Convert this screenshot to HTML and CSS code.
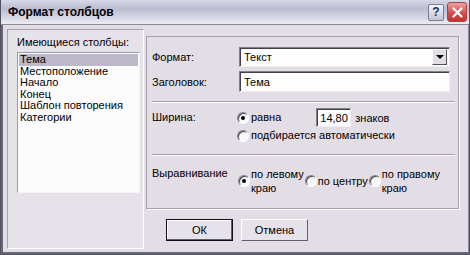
FILE: index.html
```html
<!DOCTYPE html>
<html lang="ru">
<head>
  <meta charset="UTF-8">
  <title>Формат столбцов</title>
  <link rel="stylesheet" href="styles.css">
</head>
<body>

  <div class="window">
    <div class="titlebar">
      <span class="title">Формат столбцов</span>
      <div class="tb-buttons">
        <span class="tb-help">?</span>
        <span class="tb-close">
          <svg width="11" height="11" viewBox="0 0 11 11"><path d="M1.5 1.5 L9.5 9.5 M9.5 1.5 L1.5 9.5" stroke="#fff" stroke-width="2.2" stroke-linecap="round"/></svg>
        </span>
      </div>
    </div>

    <div class="client">
      <div class="left-pane">
        <div class="list-label">Имеющиеся столбцы:</div>
        <ul class="listbox">
          <li class="selected">Тема</li>
          <li>Местоположение</li>
          <li>Начало</li>
          <li>Конец</li>
          <li>Шаблон повторения</li>
          <li>Категории</li>
        </ul>
      </div>

      <div class="right-pane">
        <div class="props">
          <div class="group group-format">
            <div class="row">
              <span class="label">Формат:</span>
              <div class="combo">
                <span class="combo-text">Текст</span>
                <span class="combo-btn"><span class="arrow"></span></span>
              </div>
            </div>
            <div class="row">
              <span class="label">Заголовок:</span>
              <div class="edit">Тема</div>
            </div>
          </div>

          <div class="group group-width">
            <span class="label">Ширина:</span>
            <div class="options">
              <div class="opt-row">
                <span class="radio checked"></span>
                <span class="opt-text">равна</span>
                <div class="edit small">14,80</div>
                <span class="unit">знаков</span>
              </div>
              <div class="opt-row">
                <span class="radio"></span>
                <span class="opt-text">подбирается автоматически</span>
              </div>
            </div>
          </div>

          <div class="group group-align">
            <span class="label">Выравнивание</span>
            <div class="align-opts">
              <div class="align-opt">
                <span class="radio checked"></span>
                <span class="opt-text">по левому<br>краю</span>
              </div>
              <div class="align-opt">
                <span class="radio"></span>
                <span class="opt-text">по центру</span>
              </div>
              <div class="align-opt">
                <span class="radio"></span>
                <span class="opt-text">по правому<br>краю</span>
              </div>
            </div>
          </div>
        </div>

        <div class="actions">
          <button class="btn default">ОК</button>
          <button class="btn">Отмена</button>
        </div>
      </div>
    </div>
  </div>

</body>
</html>
```

FILE: styles.css
```css
body {
  margin: 0;
  padding: 0;
  font-family: "Liberation Sans", Arial, sans-serif;
  font-size: 11px;
  color: #000;
  background: #e3dde5;
}

.window {
  width: 470px;
  height: 255px;
  box-sizing: border-box;
  border: 1px solid #505060;
  border-top: none;
  background: #e3dde5;
  display: flex;
  flex-direction: column;
  overflow: hidden;
}

.titlebar {
  height: 25px;
  box-sizing: border-box;
  display: flex;
  align-items: center;
  justify-content: space-between;
  padding: 0 2px 0 7px;
  background: linear-gradient(#d8d8e8, #bcbcd2 35%, #d4d4e2 70%, #ececf2);
  border-bottom: 1px solid #8c8898;
}

.title {
  font-weight: bold;
  font-size: 12px;
}

.tb-buttons {
  display: flex;
  align-items: center;
  gap: 3px;
}

.tb-help {
  width: 16px;
  height: 17px;
  box-sizing: border-box;
  border: 1px solid #7c7c90;
  border-radius: 2px;
  background: linear-gradient(#f4f4f8, #c4c4d4);
  color: #203070;
  font-weight: bold;
  font-size: 12px;
  display: flex;
  align-items: center;
  justify-content: center;
}

.tb-close {
  width: 20px;
  height: 20px;
  box-sizing: border-box;
  border: 1px solid #a04848;
  border-radius: 3px;
  background: linear-gradient(#f0a0a0, #d84848 60%, #c83030);
  display: flex;
  align-items: center;
  justify-content: center;
}

.client {
  flex: 1;
  display: flex;
  padding: 4px 2px 3px 4px;
  border-left: 2px solid #686878;
  border-right: 1px solid #8c8898;
  border-bottom: 2px solid #686878;
  gap: 2px;
}

.left-pane {
  width: 137px;
  box-sizing: border-box;
  border: 1px solid #a8a0ac;
  border-right-color: #fff;
  border-bottom-color: #fff;
  padding: 6px 3px 0 9px;
  background: #e6e2ea;
}

.list-label {
  height: 16px;
  line-height: 13px;
}

.listbox {
  list-style: none;
  margin: 0;
  padding: 1px;
  height: 141px;
  box-sizing: border-box;
  background: #fcfcfc;
  border: 1px solid #9c98a4;
  border-right-color: #f4f0f4;
  border-bottom-color: #f4f0f4;
}

.listbox li {
  line-height: 11.6px;
  height: 11.6px;
  padding-left: 1px;
}

.listbox li.selected {
  background: #bcb8c8;
}

.right-pane {
  flex: 1;
  display: flex;
  flex-direction: column;
  padding-top: 7px;
}

.props {
  width: 314px;
  height: 174px;
  box-sizing: border-box;
  border: 1px solid #a8a0ac;
  border-right-color: #fff;
  border-bottom-color: #fff;
  box-shadow: inset -1px -1px 0 #a8a0ac;
  display: flex;
  flex-direction: column;
  padding: 0 4px 0 5px;
}

.group {
  border-bottom: 1px solid #a8a0ac;
  box-shadow: 0 1px 0 #fff;
  display: flex;
}

.group:last-child {
  border-bottom: none;
  box-shadow: none;
}

.label {
  width: 87px;
  flex: none;
}

.group-format {
  height: 65px;
  flex-direction: column;
  padding-top: 10px;
  box-sizing: border-box;
  gap: 4px;
}

.group-format .row {
  display: flex;
  align-items: center;
  padding-right: 5px;
}

.combo, .edit {
  flex: 1;
  height: 20px;
  box-sizing: border-box;
  background: #fdfdfd;
  border: 1px solid #808088;
  border-right-color: #f0eef2;
  border-bottom-color: #f0eef2;
  box-shadow: inset 1px 1px 0 #404048;
  display: flex;
  align-items: center;
  padding-left: 4px;
}

.edit {
  height: 21px;
}

.combo {
  justify-content: space-between;
  padding-right: 2px;
}

.combo-btn {
  width: 15px;
  height: 16px;
  box-sizing: border-box;
  background: #e3dde5;
  border: 1px solid #fff;
  border-right-color: #505058;
  border-bottom-color: #505058;
  display: flex;
  align-items: center;
  justify-content: center;
}

.arrow {
  width: 0;
  height: 0;
  border-left: 4px solid transparent;
  border-right: 4px solid transparent;
  border-top: 4px solid #000;
}

.group-width {
  height: 53px;
  box-sizing: border-box;
  padding-top: 7px;
}

.group-width .label {
  padding-top: 2px;
}

.options {
  display: flex;
  flex-direction: column;
  gap: 1px;
}

.opt-row {
  display: flex;
  align-items: center;
  height: 17px;
}

.radio {
  width: 12px;
  height: 12px;
  box-sizing: border-box;
  border-radius: 50%;
  border: 1px solid #808088;
  border-right-color: #fff;
  border-bottom-color: #fff;
  background: #f8f8f8;
  box-shadow: inset 1px 1px 0 #484850;
  flex: none;
  display: flex;
  align-items: center;
  justify-content: center;
}

.radio.checked::after {
  content: "";
  width: 4px;
  height: 4px;
  border-radius: 50%;
  background: #000;
}

.opt-text {
  line-height: 15px;
}

.group-width .opt-row .radio {
  margin-left: -2px;
  margin-right: 0;
}

.group-width .opt-text {
  margin-left: 2px;
}

.edit.small {
  flex: none;
  width: 35px;
  height: 19px;
  margin-left: 35px;
  padding-left: 3px;
}

.unit {
  margin-left: 4px;
}

.group-align {
  flex: 1;
  padding-top: 12px;
  align-items: flex-start;
}

.align-opts {
  display: flex;
  align-items: center;
  margin-left: -1px;
}

.align-opt {
  display: flex;
  align-items: center;
  margin-right: 1px;
}

.align-opt .radio {
  margin-right: 1px;
}

.align-opt .opt-text {
  line-height: 14px;
}

.actions {
  display: flex;
  gap: 8px;
  padding: 9px 0 0 20px;
}

.btn {
  width: 67px;
  height: 22px;
  font-family: "Liberation Sans", Arial, sans-serif;
  font-size: 11px;
  color: #000;
  background: #e6e2ea;
  border: 1px solid #fff;
  border-right-color: #606068;
  border-bottom-color: #606068;
  padding: 0;
}

.btn.default {
  border: 1px solid #101018;
  box-shadow: inset -1px -1px 0 #606068, inset 1px 1px 0 #fff;
}
```
